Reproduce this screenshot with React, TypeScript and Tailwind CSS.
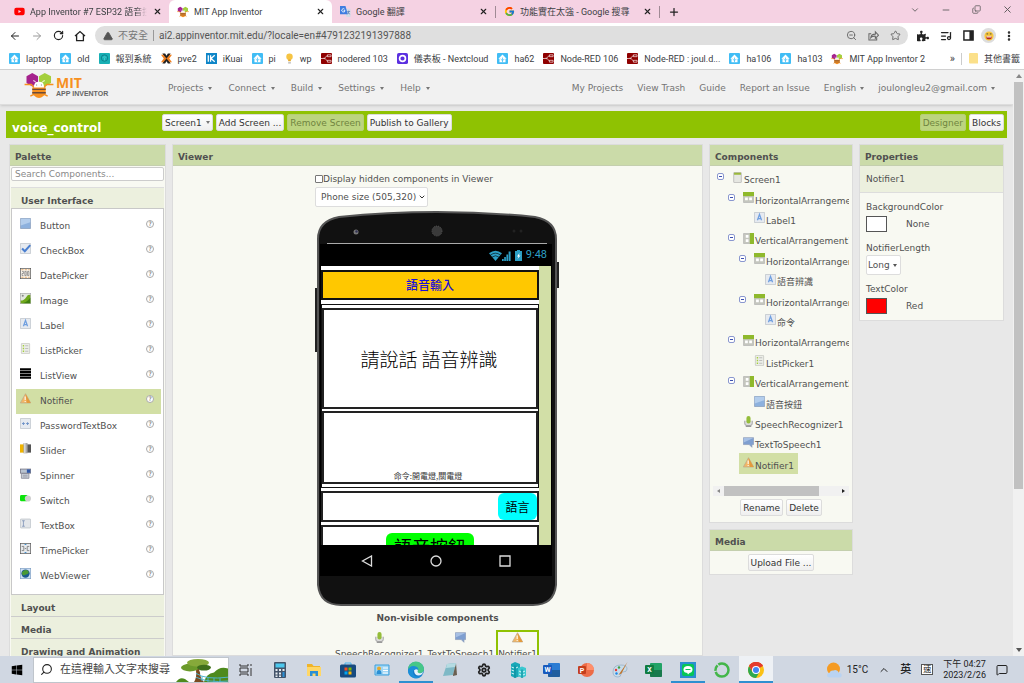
import type { ReactNode } from 'react'
import {
  ArrowLeft, ArrowRight, ChevronDown, ChevronUp, Copy, ListMusic, MessageSquare,
  Minus, MoreVertical, Plus, RotateCw, Search, Settings, Star, TriangleAlert, X, ZoomOut,
} from 'lucide-react'
import { FaYoutube, FaWindows, FaPuzzlePiece } from 'react-icons/fa'
import { FcGoogle } from 'react-icons/fc'

// ─── Data ─────────────────────────────────────────────────────────────────────

type Kind =
  | 'button' | 'checkbox' | 'date' | 'image' | 'label' | 'listpicker' | 'listview' | 'notifier'
  | 'password' | 'slider' | 'spinner' | 'switch' | 'textbox' | 'time' | 'web'
  | 'screen' | 'horizontal' | 'vertical' | 'speech' | 'tts'

const PALETTE: { name: string; kind: Kind }[] = [
  { name: 'Button', kind: 'button' },
  { name: 'CheckBox', kind: 'checkbox' },
  { name: 'DatePicker', kind: 'date' },
  { name: 'Image', kind: 'image' },
  { name: 'Label', kind: 'label' },
  { name: 'ListPicker', kind: 'listpicker' },
  { name: 'ListView', kind: 'listview' },
  { name: 'Notifier', kind: 'notifier' },
  { name: 'PasswordTextBox', kind: 'password' },
  { name: 'Slider', kind: 'slider' },
  { name: 'Spinner', kind: 'spinner' },
  { name: 'Switch', kind: 'switch' },
  { name: 'TextBox', kind: 'textbox' },
  { name: 'TimePicker', kind: 'time' },
  { name: 'WebViewer', kind: 'web' },
]

const TREE: { name: string; kind: Kind; depth: number; open?: boolean }[] = [
  { name: 'Screen1', kind: 'screen', depth: 0, open: true },
  { name: 'HorizontalArrangement1', kind: 'horizontal', depth: 1, open: true },
  { name: 'Label1', kind: 'label', depth: 2 },
  { name: 'VerticalArrangement1', kind: 'vertical', depth: 1, open: true },
  { name: 'HorizontalArrangement2', kind: 'horizontal', depth: 2, open: true },
  { name: '語音辨識', kind: 'label', depth: 3 },
  { name: 'HorizontalArrangement3', kind: 'horizontal', depth: 2, open: true },
  { name: '命令', kind: 'label', depth: 3 },
  { name: 'HorizontalArrangement4', kind: 'horizontal', depth: 1, open: true },
  { name: 'ListPicker1', kind: 'listpicker', depth: 2 },
  { name: 'VerticalArrangement2', kind: 'vertical', depth: 1, open: true },
  { name: '語音按鈕', kind: 'button', depth: 2 },
  { name: 'SpeechRecognizer1', kind: 'speech', depth: 1 },
  { name: 'TextToSpeech1', kind: 'tts', depth: 1 },
  { name: 'Notifier1', kind: 'notifier', depth: 1 },
]

const INDENT = ['pl-[7px]', 'pl-[18px]', 'pl-[29px]', 'pl-[40px]']

const BOOKMARKS: { name: string; icon: ReactNode }[] = [
  { name: 'laptop', icon: <HomeAssistant /> },
  { name: 'old', icon: <HomeAssistant /> },
  { name: '報到系統', icon: <TealMark /> },
  { name: 'pve2', icon: <Proxmox /> },
  { name: 'iKuai', icon: <IKuai /> },
  { name: 'pi', icon: <HomeAssistant /> },
  { name: 'wp', icon: <Bulb /> },
  { name: 'nodered 103', icon: <NodeRed /> },
  { name: '儀表板 - Nextcloud', icon: <Dashboard /> },
  { name: 'ha62', icon: <HomeAssistant /> },
  { name: 'Node-RED 106', icon: <NodeRed /> },
  { name: 'Node-RED : joul.d...', icon: <NodeRed /> },
  { name: 'ha106', icon: <HomeAssistant /> },
  { name: 'ha103', icon: <HomeAssistant /> },
  { name: 'MIT App Inventor 2', icon: <Bee className="size-3" /> },
]

// ─── Page ─────────────────────────────────────────────────────────────────────

export default function App() {
  return (
    <div className="flex h-screen flex-col overflow-hidden bg-[#e8e8e8] font-[Roboto,'Noto_Sans_CJK_TC',sans-serif] text-[9px] leading-3 text-[#3c4043]">
      <TabStrip />
      <Toolbar />
      <BookmarkBar />

      <div className="flex min-h-0 flex-1 font-['DejaVu_Sans','Noto_Sans_CJK_TC',sans-serif] text-[#505050]">
        <div className="flex min-w-0 flex-1 flex-col overflow-hidden">
          <SiteHeader />
          <ProjectBar />
          <main className="flex min-h-0 flex-1 items-start gap-[6px] px-[9px] pt-[6px]">
            <Palette />
            <Viewer />
            <div className="flex w-36 shrink-0 flex-col gap-[6px]">
              <Components />
              <Media />
            </div>
            <Properties />
          </main>
        </div>
        <PageScrollbar />
      </div>

      <Taskbar />
    </div>
  )
}

// ─── Browser window ───────────────────────────────────────────────────────────

function Tab({ icon, title, active, fade }: { icon: ReactNode; title: string; active?: boolean; fade?: boolean }) {
  return (
    <div className={`flex h-full w-[163px] shrink items-center gap-[5px] pr-[6px] pl-2 ${active ? 'rounded-t-md bg-white' : ''}`}>
      {icon}
      <span className={`min-w-0 flex-1 overflow-hidden whitespace-nowrap ${fade ? 'mask-r-from-90%' : ''}`}>{title}</span>
      <button aria-label="Close tab" className="p-px"><X className="size-[9px] text-[#222]" strokeWidth={3} /></button>
    </div>
  )
}

function TabStrip() {
  return (
    <div className="flex h-[23px] shrink-0 items-center bg-[#f5d2e3] pl-[6px]">
      <Tab icon={<FaYoutube className="size-[11px] text-[#f00]" />} title="App Inventor #7 ESP32 語音控制" fade />
      <Tab icon={<Bee className="size-3" />} title="MIT App Inventor" active />
      <Tab icon={<Translate />} title="Google 翻譯" />
      <span className="h-3 w-px bg-[#a08a95]" />
      <Tab icon={<FcGoogle className="size-[11px]" />} title="功能實在太強 - Google 搜尋" />
      <span className="h-3 w-px bg-[#a08a95]" />
      <button aria-label="New tab" className="ml-2"><Plus className="size-3 text-[#222]" strokeWidth={2.5} /></button>
      <div className="ml-auto flex h-full items-center gap-[21px] pr-[11px] pb-1 text-[#555]">
        <button aria-label="Search tabs"><ChevronDown className="size-[10px]" strokeWidth={2} /></button>
        <button aria-label="Minimise"><Minus className="size-[10px]" strokeWidth={2} /></button>
        <button aria-label="Restore"><Copy className="size-[9px] rotate-180 -scale-x-100" strokeWidth={2} /></button>
        <button aria-label="Close window"><X className="size-[11px]" strokeWidth={2} /></button>
      </div>
    </div>
  )
}

function Toolbar() {
  return (
    <div className="flex h-[25px] shrink-0 items-center bg-white pr-[9px] pl-[9px]">
      <div className="flex w-[86px] shrink-0 items-center gap-[10px] text-[#222]">
        <button aria-label="Back"><ArrowLeft className="size-3" /></button>
        <button aria-label="Forward"><ArrowRight className="size-3 text-[#999]" /></button>
        <button aria-label="Reload"><RotateCw className="size-[11px]" strokeWidth={2.5} /></button>
        <button aria-label="Home">
          <svg viewBox="0 0 12 12" className="size-3" fill="none" stroke="currentColor" strokeWidth="1.3">
            <path d="M1 6 6 1.500 11 6M2.600 5v5.600h6.800V5" />
          </svg>
        </button>
      </div>
      <div className="flex h-[19px] min-w-0 flex-1 items-center rounded-full bg-[#dfdfdf] pr-[7px] pl-2 text-[10px] text-[#666]">
        <TriangleAlert className="size-[10px] fill-[#555] text-[#555]" />
        <span className="ml-[5px] text-[10px] text-[#777]">不安全</span>
        <span className="mx-[5px] h-[11px] w-px bg-[#999]" />
        <input aria-label="Address" defaultValue="ai2.appinventor.mit.edu/?locale=en#4791232191397888" className="min-w-0 flex-1 bg-transparent text-[#555] outline-none" />
        <div className="flex items-center gap-[11px]">
          <button aria-label="Zoom"><ZoomOut className="size-[11px]" /></button>
          <button aria-label="Share">
            <svg viewBox="0 0 12 12" className="size-[11px]" fill="none" stroke="currentColor" strokeWidth="1.100">
              <path d="M3.500 4H1v7h8.500V8.500" /><path d="M3 8.500q.5-4 5-4V2l3.500 3.700L8 9V6.700Q4.500 6.500 3 8.500z" />
            </svg>
          </button>
          <button aria-label="Bookmark"><Star className="size-[11px]" /></button>
        </div>
      </div>
      <div className="flex items-center gap-[11px] pl-[9px] text-[#222]">
        <button aria-label="Extensions"><FaPuzzlePiece className="size-3" /></button>
        <button aria-label="Media"><ListMusic className="size-3" strokeWidth={2.5} /></button>
        <button aria-label="Side panel">
          <svg viewBox="0 0 12 12" className="size-[11px]"><path d="M1 1h10v10H1z" fill="none" stroke="#222" strokeWidth="1.6" /><path d="M7 1h4v10H7z" fill="#222" /></svg>
        </button>
        <button aria-label="Profile" className="-mx-1 flex size-[15px] items-center justify-center rounded-full bg-[#ddd]">
          <svg viewBox="0 0 12 12" className="size-[10px]">
            <circle cx="6" cy="6" r="5.500" fill="#f7c63d" />
            <path d="M2.500 6.500h7a3.500 3.500 0 0 1-7 0" fill="#b3261e" /><path d="M3 6.500h6v1.200H3z" fill="#fff" />
            <path d="M3 3.500h2M7 3.500h2" stroke="#553" strokeWidth="1.2" />
          </svg>
        </button>
        <button aria-label="Menu"><MoreVertical className="size-3" strokeWidth={3} /></button>
      </div>
    </div>
  )
}

function BookmarkBar() {
  return (
    <nav className="flex h-[22px] shrink-0 items-center border-b border-[#d0d0d0] bg-white pr-1 pl-[9px] whitespace-nowrap">
      <div className="flex min-w-0 flex-1 items-center gap-[9px] overflow-hidden">
        {BOOKMARKS.map(b => (
          <a key={b.name} href="#" className="flex items-center gap-[6px]">{b.icon}{b.name}</a>
        ))}
      </div>
      <button className="px-[6px] text-[11px]">»</button>
      <span className="h-3 w-px bg-[#ccc]" />
      <a href="#" className="flex items-center gap-[6px] pl-[7px]">
        <svg viewBox="0 0 9 11" className="h-[11px] w-[9px]"><path d="M0 1q0-1 1-1h7q1 0 1 1v9.500H1q-1 0-1-1z" fill="#fbe08a" /></svg>
        其他書籤
      </a>
    </nav>
  )
}

function PageScrollbar() {
  return (
    <div className="flex w-[11px] shrink-0 flex-col items-center bg-[#f1f1f1] pt-1">
      <span className="border-x-[3px] border-b-[4px] border-transparent border-b-[#888]" />
      <span className="mt-1 h-[70%] w-[9px] bg-[#c1c1c1]" />
      <span className="mt-auto mb-1 border-x-[3px] border-t-[4px] border-transparent border-t-[#555]" />
    </div>
  )
}

// ─── Site chrome ──────────────────────────────────────────────────────────────

function Caret() {
  return <span className="border-x-2 border-t-[3px] border-transparent border-t-[#777]" />
}

function SiteHeader() {
  return (
    <header className="flex h-[35px] shrink-0 items-center border-b border-[#ddd] bg-[#f1f1f1] pt-[2px] pr-[18px] pl-6 whitespace-nowrap text-[#747474] shadow-sm">
      <a href="#" className="flex w-36 shrink-0 items-center gap-[2px] pb-[5px]">
        <Bee className="h-[25px] w-[30px]" />
        <span className="flex flex-col pt-[2px] font-['Open_Sans',sans-serif] font-bold">
          <span className="text-[14px] leading-[14px] text-[#f7901e]">MIT</span>
          <span className="font-['Liberation_Sans_Narrow','Liberation_Sans',sans-serif] text-[7px] leading-2 text-[#666]">APP INVENTOR</span>
        </span>
      </a>
      <nav className="flex gap-4">
        {['Projects', 'Connect', 'Build', 'Settings', 'Help'].map(m => (
          <button key={m} className="flex items-center gap-[5px]">{m} <Caret /></button>
        ))}
      </nav>
      <nav className="ml-auto flex gap-[14px]">
        {['My Projects', 'View Trash', 'Guide', 'Report an Issue'].map(m => <a key={m} href="#">{m}</a>)}
        {['English', 'joulongleu2@gmail.com'].map(m => (
          <button key={m} className="flex items-center gap-1">{m} <Caret /></button>
        ))}
      </nav>
    </header>
  )
}

function BarButton({ children, disabled }: { children: ReactNode; disabled?: boolean }) {
  return (
    <button
      disabled={disabled}
      className={`flex h-[17px] items-center gap-1 rounded-xs border px-[2px] whitespace-nowrap ${
        disabled
          ? 'border-[#b6cf76] bg-[#bcd480] text-[#70843f]'
          : 'border-[#dcdcdc] bg-linear-to-b from-white to-[#efefef] text-[#333]'
      }`}
    >
      {children}
    </button>
  )
}

function ProjectBar() {
  return (
    <div className="mx-[6px] mt-[6px] flex h-[27px] shrink-0 bg-[#8fc202] px-[3px] pt-[3px]">
      <h1 className="w-[153px] shrink-0 pt-[6px] pl-[3px] text-[12px] leading-4 font-bold text-white">voice_control</h1>
      <div className="flex items-start gap-[3px]">
        <BarButton>Screen1 <Caret /></BarButton>
        <BarButton>Add Screen ...</BarButton>
        <BarButton disabled>Remove Screen</BarButton>
        <BarButton>Publish to Gallery</BarButton>
      </div>
      <div className="ml-auto flex items-start gap-[3px]">
        <BarButton disabled>Designer</BarButton>
        <BarButton>Blocks</BarButton>
      </div>
    </div>
  )
}

function PanelTitle({ children }: { children: ReactNode }) {
  return (
    <h2 className="flex h-[21px] shrink-0 items-center border-b border-[#c4cfae] bg-[#cbdba9] pt-1 pl-[5px] font-bold">{children}</h2>
  )
}

const panel = 'flex flex-col border border-[#dcdcdc] bg-[#f8f9f2]'

// ─── Palette ──────────────────────────────────────────────────────────────────

function Palette() {
  return (
    <section className={`${panel} w-[157px] shrink-0`}>
      <PanelTitle>Palette</PanelTitle>
      <div className="flex flex-col px-px pt-px">
        <input
          aria-label="Search components"
          placeholder="Search Components..."
          className="h-[14px] w-full rounded-xs border border-[#ccc] bg-white px-[3px] outline-none placeholder:text-[#888]"
        />
        <h3 className="mt-[6px] flex h-[21px] items-center border-t border-[#ddd] bg-[#ecf0de] pt-[6px] pl-[10px] font-bold">User Interface</h3>
        <ul className="border border-[#c8c8c8] bg-white py-[5px] pr-[2px] pl-1">
          {PALETTE.map(p => (
            <li key={p.name} className={`flex h-[25px] items-center pr-[7px] pb-[6px] pl-1 ${p.kind === 'notifier' ? 'bg-[#d2dfa5]' : ''}`}>
              <ComponentIcon kind={p.kind} />
              <span className="flex-1 pt-1 pl-[9px]">{p.name}</span>
              <button aria-label={`About ${p.name}`} className="flex size-2 items-center justify-center rounded-full border border-[#aaa] bg-white text-[6px] leading-none text-[#555]">?</button>
            </li>
          ))}
        </ul>
        {['Layout', 'Media', 'Drawing and Animation'].map(s => (
          <h3 key={s} className="flex h-[22px] items-center border-b border-[#ccc] bg-[#ecf0de] pt-1 pl-[10px] font-bold">{s}</h3>
        ))}
      </div>
    </section>
  )
}

// ─── Viewer ───────────────────────────────────────────────────────────────────

function Viewer() {
  return (
    <section className={`${panel} min-w-0 flex-1 self-stretch overflow-hidden`}>
      <PanelTitle>Viewer</PanelTitle>
      <div className="mx-auto flex w-[245px] flex-col pt-[7px]">
        <label className="flex items-center">
          <input type="checkbox" className="size-2 appearance-none rounded-[1px] border border-[#777] bg-white" />
          Display hidden components in Viewer
        </label>
        <div className="relative mt-[2px] w-[113px]">
          <select aria-label="Phone size" className="h-5 w-full appearance-none rounded-xs border border-[#ddd] bg-white pl-[5px]">
            <option>Phone size (505,320)</option>
          </select>
          <ChevronDown className="pointer-events-none absolute top-[6px] right-[2px] size-2 text-[#333]" strokeWidth={3} />
        </div>
        <Phone />
        <h3 className="mt-[6px] text-center font-bold">Non-visible components</h3>
        <div className="mt-[6px] mr-[3px] flex justify-center">
          <NonVisible name="SpeechRecognizer1" kind="speech" />
          <NonVisible name="TextToSpeech1" kind="tts" />
          <NonVisible name="Notifier1" kind="notifier" selected />
        </div>
      </div>
    </section>
  )
}

function NonVisible({ name, kind, selected }: { name: string; kind: Kind; selected?: boolean }) {
  return (
    <div className={`flex flex-col items-center gap-[5px] border-2 ${selected ? 'border-[#8fc202]' : 'border-transparent'}`}>
      <ComponentIcon kind={kind} />
      {name}
    </div>
  )
}

function Phone() {
  return (
    <div className="relative mt-1 mr-[3px] ml-[2px] flex h-[395px] flex-col pr-[5px] pl-[3px]">
      <svg viewBox="0 0 240 395" preserveAspectRatio="none" className="absolute inset-0 size-full overflow-visible">
        <path d="M-2 77h3v64h-3zM240 51h2v26h-2z" fill="#222" />
        <path d="M1 28Q1 10 22 6 70 1 120 1T218 6Q239 10 239 28V374Q237 394 216 394H24Q3 394 1 374Z" fill="#111" stroke="#555" strokeWidth="2" />
        <path d="M10 32.500h220" stroke="#aaa" />
        <circle cx="39" cy="21" r="2.500" fill="#777" /><circle cx="39.500" cy="20.500" r="1.200" fill="#335" />
        <circle cx="120" cy="20" r="5" fill="#3a3a3a" stroke="#555" strokeDasharray="1 1" />
        <circle cx="197" cy="20" r="1.500" fill="#222" /><circle cx="204" cy="20" r="1.500" fill="#222" />
      </svg>

      <div className="relative mt-[33px] flex h-[332px] flex-col bg-black px-px">
        {/* Status bar */}
        <div className="flex h-[22px] shrink-0 items-center justify-end gap-1 pr-1 text-[#2d9fc6]">
          <svg viewBox="0 0 22 11" className="h-[11px] w-[22px]" fill="currentColor">
            <path d="M0 3.200q6.500-5 13 0L6.500 11z" />
            <path d="M1.500 5q5-3.600 10 0M3.200 7q3.300-2.500 6.600 0" fill="none" stroke="#000" strokeWidth=".6" />
            <path d="M13 11V9h1.700v2zM15.200 11V7h1.700v4zM17.400 11V4.500h1.700V11zM19.600 11V1.500h2V11z" />
          </svg>
          <svg viewBox="0 0 7 11" className="h-[11px] w-[7px]"><path d="M2 0h3v1h2v10H0V1h2z" fill="currentColor" /><path d="M4.500 3 2 6.500h1.500L2.500 9 5.500 5.500H4z" fill="#fff" /></svg>
          <span className="font-[Roboto,sans-serif] text-[11px]">9:48</span>
        </div>

        {/* Designed screen */}
        <div className="flex h-[279px] overflow-hidden bg-[#d2dfa7] font-['Noto_Sans_CJK_TC',sans-serif] text-black">
          <div className="flex w-[218px] shrink-0 flex-col bg-white pt-1">
            <div className="flex h-[30px] shrink-0 items-center justify-center border-2 border-[#111] bg-[#ffc800] text-[12px] font-medium text-[#1c10d8]">語音輸入</div>
            <div className="mt-1 flex shrink-0 flex-col gap-[2px] border border-[#111] py-[3px]">
              <div className="flex h-[101px] items-center justify-center border-2 border-[#222] pr-[2px] text-[19px] font-light">請說話 語音辨識</div>
              <div className="flex h-[73px] items-end justify-center border-2 border-[#222] pr-1 text-[8px] text-[#333]">命令:開電燈,關電燈</div>
            </div>
            <div className="mt-[3px] flex h-[31px] shrink-0 items-center justify-end border-2 border-[#222]">
              <button className="h-[27px] w-[39px] rounded-md bg-[#0ff] text-[12px]">語言</button>
            </div>
            <div className="mt-[3px] flex h-[60px] shrink-0 items-start justify-center border-2 border-[#222] pt-[6px]">
              <button className="h-[26px] w-[88px] rounded-md bg-[#0f0] text-[18px]">語音按鈕</button>
            </div>
          </div>
        </div>

        {/* Navigation keys */}
        <div className="flex flex-1 items-center justify-around px-3">
          <svg viewBox="0 0 12 12" className="size-3" fill="none" stroke="#ddd" strokeWidth="1.300"><path d="M10.500 1v10L1.500 6z" /></svg>
          <svg viewBox="0 0 12 12" className="size-3" fill="none" stroke="#ddd" strokeWidth="1.300"><circle cx="6" cy="6" r="5" /></svg>
          <svg viewBox="0 0 12 12" className="size-3" fill="none" stroke="#ddd" strokeWidth="1.300"><path d="M1 1h10v10H1z" /></svg>
        </div>
      </div>
    </div>
  )
}

// ─── Components, media, properties ────────────────────────────────────────────

function Components() {
  return (
    <section className={panel}>
      <PanelTitle>Components</PanelTitle>
      <div className="mr-[3px] grid h-[308px] auto-rows-fr overflow-hidden pt-[2px]">
        {TREE.map(n => (
          <div key={n.name} className={`flex items-center whitespace-nowrap ${INDENT[n.depth]}`}>
            <span className="w-[11px] shrink-0 pb-[3px]">
              {n.open && (
                <button aria-label={`Collapse ${n.name}`} className="flex size-[7px] items-center justify-center rounded-[2px] border border-[#8a97cf] bg-white">
                  <span className="h-px w-[3px] bg-[#3c50b0]" />
                </button>
              )}
            </span>
            <span className={`flex items-center gap-px px-1 ${n.kind === 'notifier' ? 'h-[22px] bg-[#d2dfa5]' : ''}`}>
              <span className="pb-[2px]"><ComponentIcon kind={n.kind} /></span>
              <span className="pt-1">{n.name}</span>
            </span>
          </div>
        ))}
      </div>
      <div className="mx-[3px] mt-3 flex h-[10px] items-center bg-[#f1f1f1] px-1">
        <span className="border-y-2 border-r-[3px] border-transparent border-r-[#888]" />
        <span className="ml-1 h-full w-[74%] bg-[#c1c1c1]" />
        <span className="ml-auto border-y-2 border-l-[3px] border-transparent border-l-[#222]" />
      </div>
      <div className="flex justify-center gap-[3px] pt-[3px] pb-[6px]">
        <BarButton>Rename</BarButton>
        <BarButton>Delete</BarButton>
      </div>
    </section>
  )
}

function Media() {
  return (
    <section className={panel}>
      <PanelTitle>Media</PanelTitle>
      <div className="flex justify-center py-[3px]">
        <BarButton>Upload File ...</BarButton>
      </div>
    </section>
  )
}

function Properties() {
  return (
    <section className={`${panel} w-[145px] shrink-0`}>
      <PanelTitle>Properties</PanelTitle>
      <p className="flex h-[27px] items-center border-b border-[#ddd] bg-[#ecf0de] pl-[6px]">Notifier1</p>
      <div className="flex flex-col px-[6px] pt-2 pb-[6px]">
        <p>BackgroundColor</p>
        <div className="mt-[3px] flex items-center gap-[19px]">
          <button aria-label="BackgroundColor" className="h-4 w-[21px] border border-[#555] bg-white" /> None
        </div>
        <label htmlFor="notifier-length" className="mt-[10px]">NotifierLength</label>
        <div className="relative mt-px w-[35px]">
          <select id="notifier-length" className="h-5 w-full appearance-none rounded-xs border border-[#ddd] bg-white pl-px">
            <option>Long</option>
          </select>
          <span className="pointer-events-none absolute top-[9px] right-[4px] border-x-2 border-t-[3px] border-transparent border-t-[#555]" />
        </div>
        <p className="mt-[8px]">TextColor</p>
        <div className="mt-[3px] flex items-center gap-[19px]">
          <button aria-label="TextColor" className="h-4 w-[21px] border border-[#555] bg-[#f00]" /> Red
        </div>
      </div>
    </section>
  )
}

// ─── Taskbar ──────────────────────────────────────────────────────────────────

function Task({ label, running, children, active }: { label: string; running?: boolean; active?: boolean; children: ReactNode }) {
  return (
    <button
      aria-label={label}
      className={`flex h-full w-[34px] items-center justify-center border-b-2 pt-[2px] ${running ? 'border-[#2f8fd0]' : 'border-transparent'} ${active ? 'bg-[#eef1f5]' : ''}`}
    >
      <svg viewBox="0 0 16 16" className="size-4 overflow-visible">{children}</svg>
    </button>
  )
}

function Taskbar() {
  return (
    <footer className="flex h-[27px] shrink-0 items-center bg-[#d0d7e2] text-[#222]">
      <button aria-label="Start" className="flex w-[33px] justify-center"><FaWindows className="size-3 text-black" /></button>
      <div className="flex h-[26px] w-[196px] shrink-0 items-center border border-[#bfc5cc] bg-white pl-[6px]">
        <Search className="size-[13px] -scale-x-100" strokeWidth={2} />
        <input aria-label="Search" placeholder="在這裡輸入文字來搜尋" className="ml-[7px] h-4 w-[116px] text-[11px] leading-4 outline-none placeholder:text-[#444]" />
        <svg viewBox="0 0 52 25" className="h-6 flex-1" preserveAspectRatio="none">
          <path d="M0 25q4-6 9-3l4 3zM28 25q2-9 10-10 6-7 14-4v14z" fill="#4e8a1d" />
          <path d="M18 25q3-5 2-12l2-4 2 6q0 6 4 10z" fill="#7a4a20" />
          <ellipse cx="14" cy="10" rx="9" ry="4" fill="#6b9a2b" /><ellipse cx="22" cy="5" rx="11" ry="4" fill="#86a93a" /><ellipse cx="28" cy="10" rx="7" ry="3" fill="#3f6f1c" />
          <path d="M20 16q10 7 32 4M20 20q12 6 32 4M26 19v5M32 20v5M38 21v4M44 21v4" fill="none" stroke="#4fb4cf" />
        </svg>
      </div>

      <Task label="Task view"><path d="M2 2v2h8V2M2 14v-2h8v2M2 6h8v4H2zM13 2v2M13 6v8" fill="none" stroke="#333" /></Task>
      <Task label="Calculator">
        <rect x="2" width="12" height="16" rx="1" fill="#44546a" /><path d="M3.500 1.500h9v4h-9z" fill="#4cc8ee" />
        <path d="M3.500 7h2v2h-2zm3.500 0h2v2H7zm3.500 0h2v2h-2zm-7 3.500h2v2h-2zm3.500 0h2v2H7zM3.500 13.500h2v1.500h-2zm3.500 0h2v1.500H7z" fill="#e8edf2" /><path d="M10.500 10h2v5h-2z" fill="#2a8fd4" />
      </Task>
      <Task label="File Explorer">
        <path d="M1 2h5l1.500 2H14v10H1z" fill="#f0b429" /><path d="M1 5h14v9H1z" fill="#ffd767" /><path d="M4 14V9h8v5h-2.500v-2.500h-3V14z" fill="#2a8fd4" />
      </Task>
      <Task label="Store">
        <path d="M5 3V1h6v2" fill="none" stroke="#4ab4ee" /><rect y="2.500" width="16" height="13" rx="1.500" fill="#164a80" />
        <path d="M4.500 5.500h3v3h-3z" fill="#f25022" /><path d="M8.500 5.500h3v3h-3z" fill="#7fba00" /><path d="M4.500 9.500h3v3h-3z" fill="#00a4ef" /><path d="M8.500 9.500h3v3h-3z" fill="#ffb900" />
      </Task>
      <Task label="Contacts">
        <path d="M1 3h14v10H1z" fill="#9fd6f5" stroke="#3ca0dc" /><circle cx="5" cy="6.500" r="2" fill="#e5a82c" /><path d="M2.500 12q0-4 2.500-4t2.500 4z" fill="#2a8fd4" /><path d="M9 6h5M9 8.500h5M9 11h5" stroke="#fff" />
      </Task>
      <Task label="Edge" running>
        <circle cx="8" cy="8" r="8" fill="#1478c8" />
        <path d="M0 8a8 8 0 0 1 16-1q0 4-4 4-3 0-3-1.500 1-.5 1-1.500Q9 5 6 5 2 5 0 8" fill="#46c788" />
        <path d="M0 8q2-4.500 6-4 4.500.5 4.500 4Q8 6 6 8t0 5q3 3 8.500 0A8 8 0 0 1 0 8" fill="#1b8fd8" />
        <path d="M6 8.500Q8 6.500 10 8q-1.500 3 2 3.200 2.500 0 3.500-2-1.500 4.300-5 4.300Q6.500 13.500 6 8.500" fill="#e5f3fa" />
      </Task>
      <Task label="Notes">
        <path d="m5 2 9-1-3 12-10 1z" fill="#7fb9c6" /><path d="m14 1 1 12-4 1v-1z" fill="#6a5f50" /><path d="m5 2 9-1-1 4-9 1z" fill="#b5dbe2" />
      </Task>
      <button aria-label="Settings" className="flex w-[34px] justify-center"><Settings className="size-[14px]" strokeWidth={3} /></button>
      <Task label="Servers">
        <path d="m1 2 4-2 5 2v12l-5 2-4-2z" fill="#18a8b8" /><path d="m8 6 4-1.500L16 6v8l-4 2-4-2z" fill="#3cc8d0" /><path d="M5 3.500V16M12 7.500V16" stroke="#0b8696" />
        <path d="m1.500 5 2.500 1M1.500 8 4 9M1.500 11l2.500 1M6 6l2-1M13 10l2-1M13 13l2-1M9 9l2 1M9 12l2 1" stroke="#d7f6f8" />
      </Task>
      <Office label="Word" letter="W" tile="fill-[#2b7cd3]" badge="bg-[#185abd]" />
      <Task label="PowerPoint">
        <circle cx="9" cy="8" r="7" fill="#ed6c47" /><path d="M9 1a7 7 0 0 1 7 7H9z" fill="#ff8f6b" /><rect y="4" width="8" height="8" rx="1" fill="#c43e1c" />
        <text x="4" y="10.500" fontSize="7" fontWeight="700" textAnchor="middle" fill="#fff">P</text>
      </Task>
      <Task label="Paint">
        <path d="M1 10q0-7 8-7 6 0 6 4 0 3-4 3-2 0-2 2 0 3-3 3-5 0-5-5" fill="#c8dceb" stroke="#8aa5ba" strokeWidth=".6" /><circle cx="4" cy="8" r="1.200" fill="#e53935" /><circle cx="7" cy="5.500" r="1.200" fill="#43a047" /><circle cx="4.500" cy="11.500" r="1.200" fill="#1e88e5" /><path d="m15.500 0-7 10-2 3 3-1.500z" fill="#c0752e" />
      </Task>
      <Office label="Excel" letter="X" tile="fill-[#21a366]" badge="bg-[#107c41]" />
      <Task label="LINE" running>
        <path d="M0 0h16v16H0z" fill="#2a8fd0" /><rect x="2" y="2" width="12" height="12" rx="2" fill="#06c755" /><ellipse cx="8" cy="7.500" rx="4.500" ry="3.500" fill="#fff" /><path d="m7 10.500 1 2 2.500-2.500z" fill="#fff" /><path d="M5.500 7.500h5" stroke="#06c755" />
      </Task>
      <Task label="Sync"><circle cx="8" cy="8" r="6.500" fill="none" stroke="#43b649" strokeWidth="2.500" strokeDasharray="18 1 6 1" /></Task>
      <Task label="Chrome" running active>
        <circle cx="8" cy="8" r="8" fill="#fbc116" /><path d="M8 8 1.100 4A8 8 0 0 1 14.900 4z" fill="#e33b2e" /><path d="M1.100 4A8 8 0 0 0 8 16l3.500-6H4.500z" fill="#2da94f" /><path d="M8 4h7a8 8 0 0 0-13.900 0l3.400 6z" fill="#e33b2e" />
        <circle cx="8" cy="8" r="4" fill="#fff" /><circle cx="8" cy="8" r="3" fill="#4285f4" />
      </Task>

      <div className="ml-auto flex items-center gap-[10px] pr-4 whitespace-nowrap">
        <span className="flex items-center gap-[5px] text-[10px]">
          <svg viewBox="0 0 16 16" className="size-4"><circle cx="7.500" cy="7" r="6.500" fill="#f59b23" /><path d="M4 15.500q-3 0-3-2.500 0-2 2.500-2.300Q4.500 8 7.500 8.500q1.500-1 3.500 0 1.500.7 1.700 2.200 3 0 3 2.500 0 2.300-2.700 2.300z" fill="#b9d3f2" /></svg>
          15°C
        </span>
        <button aria-label="Hidden icons"><ChevronUp className="size-3" strokeWidth={2} /></button>
        <span className="text-[11px] font-medium">英</span>
        <span className="border border-[#555] bg-white px-px text-[8px] leading-[9px]">速</span>
        <time className="flex flex-col items-center leading-[11px]">
          <span>下午 04:27</span>
          <span>2023/2/26</span>
        </time>
        <button aria-label="Notifications"><MessageSquare className="size-3" strokeWidth={2} /></button>
      </div>
    </footer>
  )
}

function Office({ label, letter, tile, badge }: { label: string; letter: string; tile: string; badge: string }) {
  return (
    <button aria-label={label} className="relative flex w-[34px] items-center justify-center">
      <svg viewBox="0 0 16 16" className="size-4"><rect x="4" y="1" width="12" height="14" rx="1" className={tile} /><path d="M4 8h12v7H4z" fill="#000" opacity=".25" /></svg>
      <span className={`absolute left-2 flex size-[9px] items-center justify-center rounded-[1px] text-[7px] font-bold text-white ${badge}`}>{letter}</span>
    </button>
  )
}

// ─── Icons ────────────────────────────────────────────────────────────────────

function Bee({ className }: { className: string }) {
  return (
    <svg viewBox="0 0 30 26" className={`shrink-0 ${className}`}>
      <path d="M8 0 14 3.500v7L8 14 2 10.500v-7z" fill="#a5228d" /><path d="M21 0l6.500 3.500v7L21 14l-6-3.500v-7z" fill="#a4cf3c" />
      <path d="M0 12h7l3 3M30 12h-7l-3 3M6 24l4-2M24 24l-4-2" fill="none" stroke="#f7901e" strokeWidth="1.500" />
      <path d="M10 13q0-4 5-4t5 4v3H10z" fill="#fff" /><path d="M12 10q-1-2-3-2M18 10q1-2 3-2" fill="none" stroke="#fff" />
      <path d="M8 15h14v6q-2 4-7 5-5-1-7-5z" fill="#f7901e" /><path d="M8 17h14M8 20.500h14" stroke="#6b4a3a" strokeWidth="1.500" />
      <path d="M12.500 12v1M17.500 12v1" stroke="#777" />
    </svg>
  )
}

function HomeAssistant() {
  return (
    <svg viewBox="0 0 12 12" className="size-[11px] shrink-0">
      <rect width="12" height="12" rx="1" fill="#41bdf5" />
      <path d="m6 1.500 4.500 4.700H9.300V10H2.700V6.200H1.500z" fill="#fff" />
      <path d="M6 10V5M6 8.500l2-2M6 8.500l-2-2" stroke="#41bdf5" strokeWidth=".8" />
    </svg>
  )
}

function NodeRed() {
  return (
    <svg viewBox="0 0 12 12" className="size-[11px] shrink-0">
      <rect width="12" height="12" rx="1" fill="#8f0000" />
      <path d="M0 6h2q2 0 3-1.500T8 3M3 6q2 0 3 1.500T8 9" fill="none" stroke="#fff" strokeWidth=".8" />
      <path d="M7 2h4v2H7zM7 8h4v2H7z" fill="#8f0000" stroke="#fff" strokeWidth=".7" />
    </svg>
  )
}

function TealMark() {
  return (
    <svg viewBox="0 0 12 12" className="size-[11px] shrink-0">
      <rect width="12" height="12" rx="1" fill="#18b0b5" /><circle cx="6" cy="5.500" r="3.500" fill="none" stroke="#0d7f8a" /><path d="M4 5q2-2 4 0M6 5v3" fill="none" stroke="#6dd" strokeWidth=".6" />
    </svg>
  )
}

function Proxmox() {
  return (
    <svg viewBox="0 0 12 12" className="size-[11px] shrink-0">
      <path d="M1.500.5h3L6 3 7.500.5h3L7.500 6l3 5.500h-3L6 9l-1.500 2.500h-3L4.500 6z" fill="#222" />
      <path d="M0 2h2.500L6 6 2.500 10H0l3-4zM12 2H9.500L6 6l3.500 4H12L9 6z" fill="#f08020" />
    </svg>
  )
}

function IKuai() {
  return (
    <svg viewBox="0 0 12 12" className="size-[11px] shrink-0">
      <rect width="12" height="12" fill="#0f86c8" /><path d="M2.500 2.500v7M5 2.500v7M9.500 2.500 5.500 6l4 3.500" fill="none" stroke="#fff" strokeWidth="1.400" />
    </svg>
  )
}

function Bulb() {
  return (
    <svg viewBox="0 0 9 12" className="h-[11px] w-[9px] shrink-0">
      <circle cx="4.500" cy="4" r="3.500" fill="#f6c443" /><path d="M3 7h3v2H3z" fill="#e5a82c" /><path d="M3 10h3v1.500H3z" fill="#bbb" />
    </svg>
  )
}

function Dashboard() {
  return (
    <svg viewBox="0 0 12 12" className="size-[11px] shrink-0">
      <rect width="12" height="12" rx="2" fill="#5b2fe0" /><circle cx="6" cy="6" r="3.200" fill="none" stroke="#fff" strokeWidth="1.800" />
    </svg>
  )
}

function Translate() {
  return (
    <svg viewBox="0 0 12 12" className="size-[11px] shrink-0">
      <path d="M5 3h6.500v9H7z" fill="#d3dbe6" /><path d="M0 0h6l2.500 9H0z" fill="#3f7de0" />
      <path d="M5 3.500A1.800 1.800 0 1 0 5.500 5H4" fill="none" stroke="#fff" strokeWidth=".9" /><path d="M8 6h3M9.500 5v1q0 2-1.500 3M8.500 7l2.500 2" fill="none" stroke="#5a7fb5" strokeWidth=".8" />
    </svg>
  )
}

function ComponentIcon({ kind }: { kind: Kind }) {
  return <svg viewBox="0 0 16 16" className="size-[11px] shrink-0">{GLYPHS[kind]}</svg>
}

const frame = <rect x=".5" y=".5" width="15" height="15" rx="1" fill="#e6eaf0" stroke="#b5bac2" />

const GLYPHS: Record<Kind, ReactNode> = {
  button: <><rect x=".5" y=".5" width="15" height="15" rx="1" fill="#8db1de" stroke="#8a9bb3" /><path d="M1 1h14v5L1 11z" fill="#b3cdec" /></>,
  checkbox: <>{frame}<path d="m3 8 4 4 8-9" fill="none" stroke="#4a7fd0" strokeWidth="3" /></>,
  date: <><rect x=".5" y=".5" width="15" height="15" fill="#f3efe8" stroke="#555" /><path d="M3 5h2v3H3v3h2M7 5h2v6H7zM11 5h2v6h-2z" fill="none" stroke="#777" /><path d="M2 2.500h12M2 13.500h12" stroke="#e8963c" strokeDasharray="3 2" /></>,
  image: <><rect x=".5" y=".5" width="15" height="15" fill="#e3e8e0" stroke="#aaa" /><path d="M1 11q5 0 8-5t6-3v12H1z" fill="#6fa81c" /><path d="M1 15q8 0 14-8v8z" fill="#3f8010" /><circle cx="4" cy="4" r="1.500" fill="#888" /></>,
  label: <>{frame}<path d="M5 12 8 3.500 11 12M6 9.500h4" fill="none" stroke="#6f9fe0" strokeWidth="1.800" /></>,
  listpicker: <><rect x="2" y=".5" width="12" height="15" rx="1" fill="#eceee8" stroke="#c0c2bb" /><path d="M4 4h2M4 8h2M4 12h2" stroke="#a4cf3c" strokeWidth="2" /><path d="M7.500 4H12M7.500 8H12M7.500 12H12" stroke="#aaa" /></>,
  listview: <path d="M0 2h16M0 6h16M0 10h16M0 14h16" stroke="#000" strokeWidth="3" />,
  notifier: <><path d="M8 1 15.500 14.500H.5z" fill="#f3b765" stroke="#b8a68e" /><path d="M8 1 15.500 14.500H10z" fill="#e39a3d" /><path d="M7.500 5v5M7.500 11.500v1.500" stroke="#fff" strokeWidth="1.500" /></>,
  password: <>{frame}<path d="M3 8h4M5 6v4M9 8h4M11 6v4" stroke="#6f93c8" strokeWidth="1.500" /></>,
  slider: <><path d="M0 2h6v12H0z" fill="#f0b400" /><path d="M10 2h6v12h-6z" fill="#555" /><path d="M5 0h6v15H5z" fill="#a8a8a8" /><path d="M6 0h2v15H6z" fill="#ddd" /></>,
  spinner: <><rect x=".5" y="1.500" width="15" height="6" fill="#b9c3d0" stroke="#667" /><path d="M10 2h5v5h-5z" fill="#3058a8" /><path d="M2 8h11v7H2z" fill="#cdd3da" stroke="#778" /><path d="M4 10.500h7M4 13h7" stroke="#889" /></>,
  switch: <><rect y="3" width="11" height="9" rx="2" fill="#0be30b" /><circle cx="11.500" cy="8" r="4.500" fill="#cfcfcf" /></>,
  textbox: <><rect x=".5" y="1.500" width="15" height="13" rx="1" fill="#e3e6ea" stroke="#b5bac2" /><path d="M3 4h4M5 4v8M3 12h4" stroke="#7088b0" /></>,
  time: <><rect x=".5" y=".5" width="15" height="15" fill="#e6e9ec" stroke="#555" /><path d="M2.500 5h3v6h-3M7 8h2M13.500 5h-3v6h3" fill="none" stroke="#666" /><path d="m8 1 2 2H6zM8 15l2-2H6z" fill="#3f8fd0" /></>,
  web: <><rect x=".5" y=".5" width="15" height="15" fill="#cfe0f4" stroke="#7f9fc4" /><circle cx="8" cy="8" r="6" fill="#1c5a90" /><path d="M3 6q4-5 9-2 2 4-2 5t-5 2q-3-2-2-5" fill="#4a9a34" /></>,
  screen: <><rect x="2.500" y=".5" width="11" height="15" rx="1" fill="#e6e7e2" stroke="#aaa" /><path d="M3 1h10v3H3z" fill="#9ab83a" /></>,
  horizontal: <><rect x=".5" y=".5" width="15" height="15" rx="1" fill="#c4c6be" stroke="#b4b4b4" /><path d="M0 0h16v6H0z" fill="#8fb92c" /><path d="M3 8h4v4H3zM9 8h4v4H9z" fill="#fff" /></>,
  vertical: <><rect x=".5" y=".5" width="15" height="15" rx="1" fill="#c4c6be" stroke="#b4b4b4" /><path d="M10 0h6v16h-6z" fill="#8fb92c" /><path d="M4 3h4v4H4zM4 9h4v4H4z" fill="#fff" /></>,
  speech: <><path d="M2.500 7v3q0 4 5.500 4t5.500-4V7" fill="#ddd" stroke="#aaa" strokeWidth="1.500" /><rect x="5" width="6" height="11" rx="3" fill="#94bd3a" /><path d="M4 15h8" stroke="#999" strokeWidth="2" /></>,
  tts: <><path d="M.5 1h15v10H13v4l-4-4H.5z" fill="#7f9fd0" stroke="#8a9bb8" /><path d="M1 1.500h14L1 8z" fill="#a7c0e4" /></>,
}
